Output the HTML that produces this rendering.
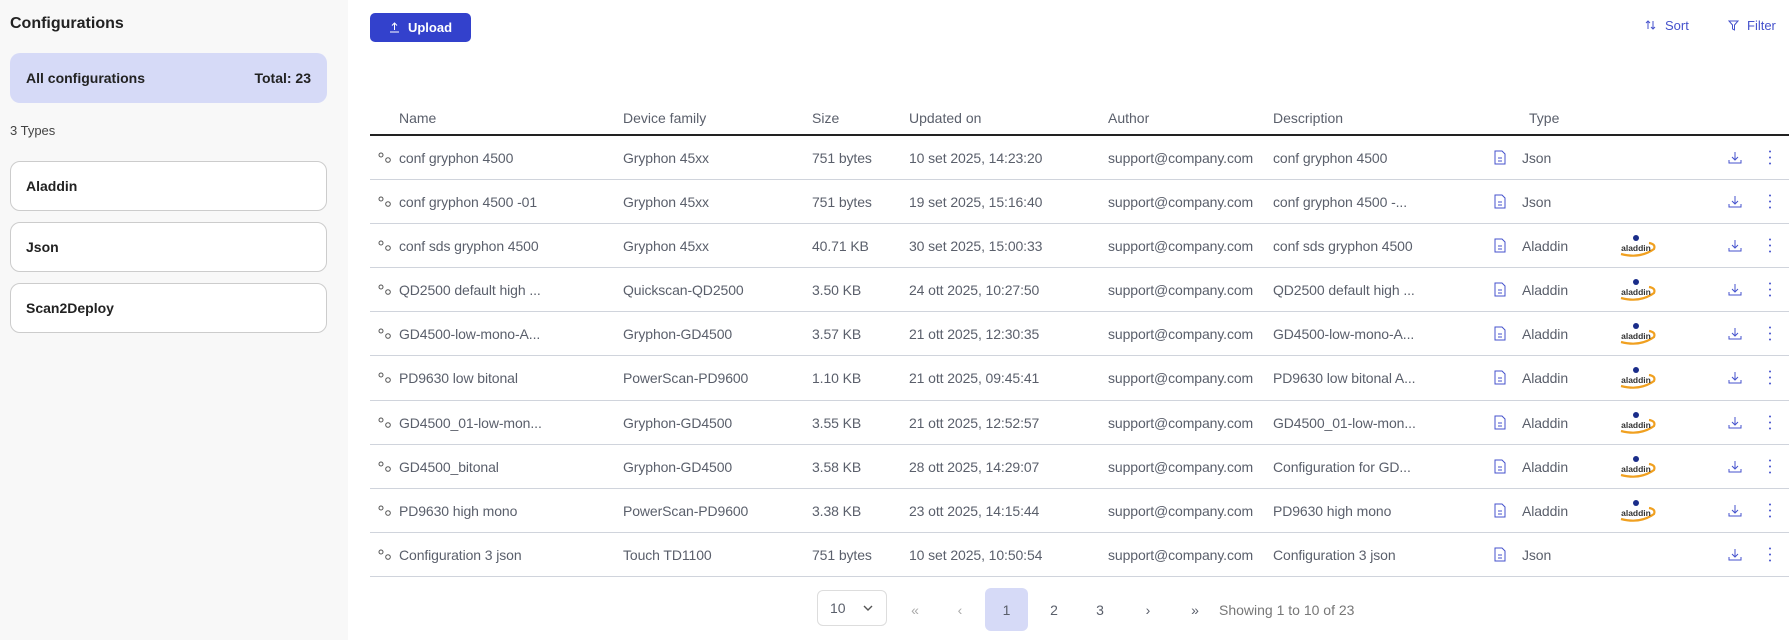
<!DOCTYPE html>
<html><head><meta charset="utf-8"><style>
*{box-sizing:border-box;margin:0;padding:0}
body{width:1789px;height:640px;overflow:hidden;background:#fff;font-family:"Liberation Sans",sans-serif;color:#5a5f6b;font-size:14px;position:relative}
.side{position:absolute;left:0;top:0;width:348px;height:640px;background:#f8f8f8}
.abs{position:absolute}
.h{left:10px;top:15px;font-size:16px;font-weight:bold;color:#222}
.all{left:10px;top:53px;width:317px;height:50px;background:#d6daf7;border-radius:10px;display:flex;justify-content:space-between;align-items:center;padding:0 16px;font-weight:bold;color:#222;font-size:14px}
.types{left:10px;top:123px;font-size:13px;color:#444}
.card{left:10px;width:317px;height:50px;border:1px solid #ccc;border-radius:10px;background:#fff;display:flex;align-items:center;padding-left:15px;font-weight:bold;color:#222;font-size:14px}
.up{left:370px;top:13px;width:101px;height:29px;background:#3341cc;border-radius:5px;color:#fff;font-weight:bold;font-size:13px;display:flex;align-items:center;justify-content:center;gap:8px}
.tl{color:#4552cc;font-size:13px;top:18px}
.hdr{left:370px;top:106px;width:1419px;height:30px;border-bottom:2px solid #222}
.hdr span{position:absolute;top:4px;font-size:14px;color:#5a5f6b}
.rows{left:370px;top:136px;width:1419px}
.r{position:relative;height:44.1px;border-bottom:1px solid #d0d4dc}
.r span{position:absolute;top:14px;white-space:nowrap;letter-spacing:-0.1px}
.r svg{position:absolute}
.pg{top:588px;height:43px;display:flex;align-items:center;justify-content:center;font-size:14px}
</style></head><body>
<div class="side"></div>
<div class="abs h">Configurations</div>
<div class="abs all"><span>All configurations</span><span>Total: 23</span></div>
<div class="abs types">3 Types</div>
<div class="abs card" style="top:161px">Aladdin</div>
<div class="abs card" style="top:222px">Json</div>
<div class="abs card" style="top:283px">Scan2Deploy</div>
<div class="abs up"><svg width="11" height="11" viewBox="0 0 11 11"><path d="M5.5 8V1M3 3.5L5.5 1 8 3.5M1 10h9" stroke="#fff" fill="none" stroke-width="1"/></svg>Upload</div>
<div class="abs tl" style="left:1645px"><svg width="12" height="12" viewBox="0 0 12 12" style="vertical-align:-1px;margin-right:8px"><path d="M3 10V2M1 4l2-2 2 2M8 2v8M6 8l2 2 2-2" stroke="#4552cc" fill="none"/></svg>Sort</div>
<div class="abs tl" style="left:1728px"><svg width="11" height="11" viewBox="0 0 11 11" style="vertical-align:-1px;margin-right:8px"><path d="M1 1h9L6.5 5v5L4.5 9V5z" stroke="#4552cc" fill="none"/></svg>Filter</div>
<div class="abs hdr"><span style="left:29px">Name</span><span style="left:253px">Device family</span><span style="left:442px">Size</span><span style="left:539px">Updated on</span><span style="left:738px">Author</span><span style="left:903px">Description</span><span style="left:1159px">Type</span></div>
<div class="abs rows" id="rows"></div>
<div class="abs" style="left:817px;top:590px;width:70px;height:36px;border:1px solid #ddd;border-radius:6px;display:flex;align-items:center;padding-left:12px;font-size:14px">10<svg width="12" height="8" viewBox="0 0 12 8" style="margin-left:16px"><path d="M2 2l4 4 4-4" stroke="#555" fill="none" stroke-width="1.4"/></svg></div>
<div class="abs pg" style="left:900px;width:30px;color:#aaa">«</div>
<div class="abs pg" style="left:948px;width:24px;color:#aaa">‹</div>
<div class="abs pg" style="left:985px;width:43px;background:#d6daf7;border-radius:6px">1</div>
<div class="abs pg" style="left:1042px;width:24px">2</div>
<div class="abs pg" style="left:1088px;width:24px">3</div>
<div class="abs pg" style="left:1136px;width:24px">›</div>
<div class="abs pg" style="left:1183px;width:24px">»</div>
<div class="abs pg" style="left:1219px;color:#777;font-size:14px">Showing 1 to 10 of 23</div>
<script>
var d=[["conf gryphon 4500","Gryphon 45xx","751 bytes","10 set 2025, 14:23:20","conf gryphon 4500","Json"],
["conf gryphon 4500 -01","Gryphon 45xx","751 bytes","19 set 2025, 15:16:40","conf gryphon 4500 -...","Json"],
["conf sds gryphon 4500","Gryphon 45xx","40.71 KB","30 set 2025, 15:00:33","conf sds gryphon 4500","Aladdin"],
["QD2500 default high ...","Quickscan-QD2500","3.50 KB","24 ott 2025, 10:27:50","QD2500 default high ...","Aladdin"],
["GD4500-low-mono-A...","Gryphon-GD4500","3.57 KB","21 ott 2025, 12:30:35","GD4500-low-mono-A...","Aladdin"],
["PD9630 low bitonal","PowerScan-PD9600","1.10 KB","21 ott 2025, 09:45:41","PD9630 low bitonal A...","Aladdin"],
["GD4500_01-low-mon...","Gryphon-GD4500","3.55 KB","21 ott 2025, 12:52:57","GD4500_01-low-mon...","Aladdin"],
["GD4500_bitonal","Gryphon-GD4500","3.58 KB","28 ott 2025, 14:29:07","Configuration for GD...","Aladdin"],
["PD9630 high mono","PowerScan-PD9600","3.38 KB","23 ott 2025, 14:15:44","PD9630 high mono","Aladdin"],
["Configuration 3 json","Touch TD1100","751 bytes","10 set 2025, 10:50:54","Configuration 3 json","Json"]];
var h="";d.forEach(function(r){
h+='<div class="r"><svg style="left:8px;top:16px" width="14" height="12" viewBox="0 0 14 12"><circle cx="3" cy="3" r="2" stroke="#555" fill="none"/><circle cx="10" cy="8" r="2.3" stroke="#555" fill="none"/></svg>'+
'<span style="left:29px">'+r[0]+'</span><span style="left:253px">'+r[1]+'</span><span style="left:442px">'+r[2]+'</span><span style="left:539px">'+r[3]+'</span><span style="left:738px">support@company.com</span><span style="left:903px">'+r[4]+'</span>'+
'<svg style="left:1124px;top:14px" width="12" height="15" viewBox="0 0 12 15"><path d="M1 1h7l3 3v10H1z M4 8h4M4 11h4" stroke="#4552cc" fill="none"/></svg>'+
'<span style="left:1152px">'+r[5]+'</span>'+
(r[5]=="Aladdin"?'<svg style="left:1246px;top:9px" width="42" height="26" viewBox="0 0 42 26"><circle cx="20" cy="5" r="3" fill="#1a2d8a"/><path d="M5 21 Q24 26 38 16 Q40 11 33 10" stroke="#f0a020" stroke-width="2.2" fill="none"/><text x="20" y="18" font-size="8.5" font-weight="bold" text-anchor="middle" fill="#333" font-family="Liberation Sans">aladdin</text></svg>':'')+
'<svg style="left:1358px;top:15px" width="14" height="13" viewBox="0 0 14 13"><path d="M7 1v8M4 6l3 3 3-3M1 9v3h12V9" stroke="#4552cc" fill="none"/></svg>'+
'<svg style="left:1398px;top:13px" width="4" height="17" viewBox="0 0 4 17"><circle cx="2" cy="2.5" r="1" fill="#4552cc"/><circle cx="2" cy="8.5" r="1" fill="#4552cc"/><circle cx="2" cy="14.5" r="1" fill="#4552cc"/></svg></div>';});
document.getElementById("rows").innerHTML=h;
</script>
</body></html>
